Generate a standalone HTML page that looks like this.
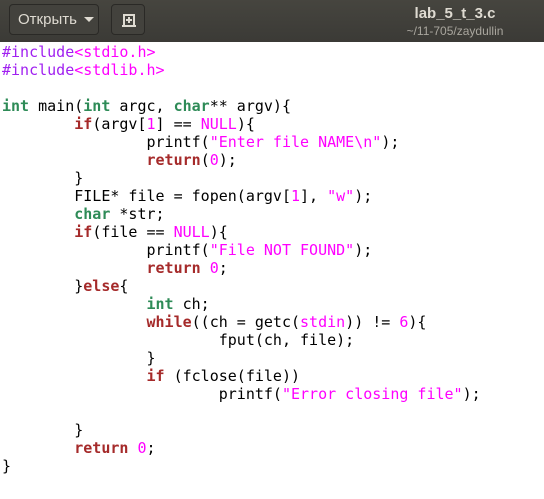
<!DOCTYPE html><html><head><style>
body{margin:0;width:544px;height:499px;background:#fff;overflow:hidden;font-family:"Liberation Sans",sans-serif}
.hd{position:absolute;left:0;top:0;width:544px;height:42px;background:linear-gradient(#46453f,#3b3a36);}
.b{position:absolute;top:4px;height:31px;border:1px solid #2a2926;border-radius:4px;background:#43423d;box-sizing:border-box;color:#dfdbd2;font-size:15px}
.t{position:absolute;left:380px;width:150px;text-align:center;color:#dfdbd2}
pre{position:absolute;left:2px;top:43px;margin:0;font-family:"DejaVu Sans Mono",monospace;font-size:15px;line-height:18px;color:#000;tab-size:8}
.p{color:#a020f0}.m{color:#ff00ff}.g{color:#2e8b57;font-weight:bold}.r{color:#a52a2a;font-weight:bold}
</style></head><body>
<div class="hd">
<div class="b" style="left:9px;width:90px"><span style="position:absolute;left:8px;top:6px">Открыть</span><span style="position:absolute;left:74px;top:12px;border:5px solid transparent;border-top:5px solid #dfdbd2;border-bottom:0"></span></div>
<div class="b" style="left:111px;width:34px"><svg style="position:absolute;left:9px;top:7px" width="16" height="16" viewBox="0 0 16 16"><path d="M3 14V3h10v11M1 14h14M8 5v6M5 8h6" stroke="#dfdbd2" stroke-width="2" fill="none"/></svg></div>
<div class="t" style="top:5px;font-size:15px;font-weight:bold">lab_5_t_3.c</div>
<div class="t" style="top:24px;font-size:12px;color:#a9a69e">~/11-705/zaydullin</div>
</div>
<pre><span class="p">#include</span><span class="m">&lt;stdio.h&gt;</span>
<span class="p">#include</span><span class="m">&lt;stdlib.h&gt;</span>

<span class="g">int</span> main(<span class="g">int</span> argc, <span class="g">char</span>** argv){
	<span class="r">if</span>(argv[<span class="m">1</span>] == <span class="m">NULL</span>){
		printf(<span class="m">"Enter file NAME\n"</span>);
		<span class="r">return</span>(<span class="m">0</span>);
	}
	FILE* file = fopen(argv[<span class="m">1</span>], <span class="m">"w"</span>);
	<span class="g">char</span> *str;
	<span class="r">if</span>(file == <span class="m">NULL</span>){
		printf(<span class="m">"File NOT FOUND"</span>);
		<span class="r">return</span> <span class="m">0</span>;
	}<span class="r">else</span>{
		<span class="g">int</span> ch;
		<span class="r">while</span>((ch = getc(<span class="m">stdin</span>)) != <span class="m">6</span>){
			fput(ch, file);
		}
		<span class="r">if</span> (fclose(file))
			printf(<span class="m">"Error closing file"</span>);

	}
	<span class="r">return</span> <span class="m">0</span>;
}</pre>
</body></html>
